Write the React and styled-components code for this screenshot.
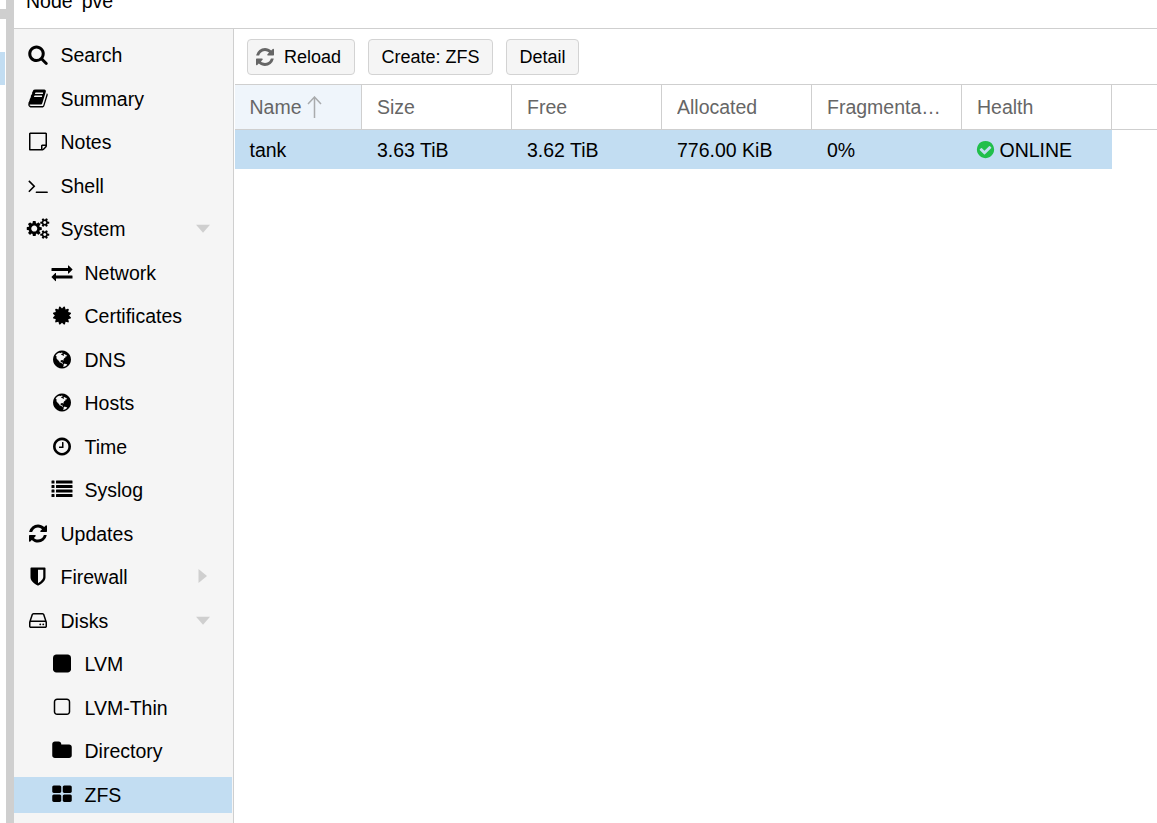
import React from 'react';
import styled, { createGlobalStyle } from 'styled-components';

const GlobalStyle = createGlobalStyle`
  * {
    box-sizing: border-box;
  }
  body {
    margin: 0;
    overflow: hidden;
    background: #fff;
    color: #000;
    font-family: 'Liberation Sans', Arial, Helvetica, sans-serif;
    font-size: 19.5px;
  }
`

const Page = styled.div`
  display: flex;
  width: 100vw;
  height: 100vh;
  overflow: hidden;
`

const TreeEdge = styled.div`
  display: flex;
  flex-direction: column;
  flex: none;
  width: 6px;
  height: 100%;
`

const TreeGap = styled.div`
  height: 10px;
  margin-top: 9px;
  background: #cfcfcf;
`

const TreeSelection = styled.div`
  width: 5px;
  height: 33px;
  margin-top: 33px;
  background: #c2ddf2;
`

const Splitter = styled.div`
  flex: none;
  width: 8px;
  background: #cfcfcf;
`

const Main = styled.div`
  display: flex;
  flex: 1;
  flex-direction: column;
  min-width: 0;
`

const TitleBar = styled.header`
  display: flex;
  align-items: flex-start;
  flex: none;
  height: 29px;
  padding-left: 12px;
  border-bottom: 1px solid #cfcfcf;
`

const Title = styled.div`
  margin-top: -10px;
  line-height: 22px;
`

const Body = styled.div`
  display: flex;
  flex: 1;
  min-height: 0;
`

const Sidebar = styled.nav`
  display: flex;
  flex-direction: column;
  flex: none;
  gap: 7.5px;
  width: 220px;
  padding: 8.5px 1px 0 0;
  background: #f5f5f5;
  border-right: 1px solid #cfcfcf;
`

const NavItem = styled.div`
  display: flex;
  align-items: center;
  flex: none;
  height: 36px;
  padding-left: ${props => props.$nested ? '36px' : '12px'};
  padding-right: 22px;
  background: ${props => props.$selected ? '#c2ddf2' : 'transparent'};
  cursor: pointer;
`

const NavIcon = styled.span`
  flex: none;
  width: 24px;
  margin-right: 10.5px;
  margin-bottom: 2.5px;
`

const NavLabel = styled.span`
  flex: 1;
  margin-top: -1px;
  line-height: 36px;
  white-space: nowrap;
`

const Glyph = styled.svg`
  display: block;
  flex: none;
  width: ${props => props.$size || 24}px;
  height: ${props => props.$size || 24}px;
  overflow: visible;
  fill: ${props => props.$color || '#000'};

  ${NavIcon} & path {
    transform: translateY(48px);
  }
`

const Expander = styled.svg`
  display: block;
  flex: none;
  width: 14px;
  height: 14px;
  margin-bottom: 2.5px;
  fill: #cfcfcf;
`

const Panel = styled.section`
  display: flex;
  flex: 1;
  flex-direction: column;
  min-width: 0;
  padding-left: 1px;
`

const Toolbar = styled.div`
  display: flex;
  flex: none;
  gap: 13px;
  height: 55px;
  padding: 10px 12px 0;
`

const Button = styled.button`
  display: flex;
  align-items: center;
  justify-content: ${props => props.$withIcon ? 'flex-start' : 'center'};
  gap: 7px;
  width: ${props => props.$width}px;
  height: 36px;
  padding: ${props => props.$withIcon ? '0 0 0 5px' : '0'};
  background: #f5f5f5;
  border: 1px solid #d3d3d3;
  border-radius: 4px;
  color: #000;
  font-family: inherit;
  font-size: 18px;
  line-height: 34px;
  white-space: nowrap;
`

const HeaderRow = styled.div`
  display: flex;
  flex: none;
  height: 46px;
  border-top: 1px solid #cfcfcf;
  border-bottom: 1px solid #cfcfcf;
`

const HeaderCell = styled.div`
  display: flex;
  align-items: center;
  flex: none;
  width: ${props => props.$width}px;
  padding: 0 15px;
  padding-left: ${props => props.$sorted ? 14.5 : 15}px;
  background: ${props => props.$sorted ? '#eff5fb' : '#fff'};
  border-right: 1px solid #cfcfcf;
  color: #666;
`

const HeaderText = styled.span`
  overflow: hidden;
  text-overflow: ellipsis;
  white-space: nowrap;
`

const SortArrow = styled.svg`
  flex: none;
  width: 15px;
  height: 22px;
  margin-left: 5px;
  fill: none;
  stroke: #a9abad;
  stroke-width: 1.5;
`

const Row = styled.div`
  display: flex;
  flex: none;
  width: 877px;
  height: 39px;
  background: #c2ddf2;
`

const Cell = styled.div`
  display: flex;
  align-items: center;
  flex: none;
  width: ${props => props.$width}px;
  padding: 2px 0 0 ${props => props.$sorted ? 14.5 : 15}px;
  white-space: nowrap;
`

const HealthIcon = styled.span`
  flex: none;
  margin: 0 2.5px 2px -3px;
`

const list = [128, 512, 896, 1280]
  .map(y => `M32 ${y}h192q32 0 32 32v192q0 32-32 32h-192q-32 0-32-32v-192q0-32 32-32zM416 ${y}h1344q32 0 32 32v192q0 32-32 32h-1344q-32 0-32-32v-192q0-32 32-32z`)
  .join('')

const smallGear = 'v140q0 16-149 31-12 27-30 52 51 113 51 138 0 4-4 7-122 71-124 71-8 0-46-47t-52-68q-20 2-30 2t-30-2q-14 21-52 68t-46 47q-2 0-124-71-4-3-4-7 0-25 51-138-18-25-30-52-149-15-149-31v-140q0-16 149-31 13-29 30-52-51-113-51-138 0-4 4-7 4-2 35-20t59-34 30-16q8 0 46 46.5t52 67.5q20-2 30-2t30 2q51-71 92-112l6-2q4 0 124 70 4 3 4 7 0 25-51 138 17 23 30 52 149 15 149 31z'

// all drawn on a 1792 unit square
const icons = {
  search: 'M1216 832q0-185-131.5-316.5t-316.5-131.5-316.5 131.5-131.5 316.5 131.5 316.5 316.5 131.5 316.5-131.5 131.5-316.5zm512 832q0 52-38 90t-90 38q-54 0-90-38l-343-342q-179 124-399 124-143 0-273.5-55.5t-225-150-150-225-55.5-273.5 55.5-273.5 150-225 225-150 273.5-55.5 273.5 55.5 225 150 150 225 55.5 273.5q0 220-124 399l343 343q37 37 37 90z',
  book: 'M1703 478q40 57 18 129l-275 906q-19 64-76.5 107.5t-122.5 43.5h-923q-77 0-148.5-53.5t-99.5-131.5q-24-67-2-127 0-4 3-27t4-37q1-8-3-21.5t-3-19.5q2-11 8-21t16.5-23.5 16.5-23.5q23-38 45-91.5t30-91.5q3-10 .5-30t-.5-28q3-11 17-28t17-23q21-36 42-92t25-90q1-9-2.5-32t.5-28q4-13 22-30.5t22-22.5q19-26 42.5-84.5t27.5-96.5q1-8-3-25.5t-2-26.5q2-8 9-18t18-23 17-21q8-12 16.5-30.5t15-35 16-36 19.5-32 26.5-23.5 36-11.5 47.5 5.5l-1 3q38-9 51-9h761q74 0 114 56t18 130l-274 906q-36 119-71.5 153.5t-128.5 34.5h-869q-27 0-38 15-11 16-1 43 24 70 144 70h923q29 0 56-15.5t35-41.5l300-987q7-22 5-57 38 15 59 43zm-1064 2q-4 13 2 22.5t20 9.5h608q13 0 25.5-9.5t16.5-22.5l21-64q4-13-2-22.5t-20-9.5h-608q-13 0-25.5 9.5t-16.5 22.5zm-83 256q-4 13 2 22.5t20 9.5h608q13 0 25.5-9.5t16.5-22.5l21-64q4-13-2-22.5t-20-9.5h-608q-13 0-25.5 9.5t-16.5 22.5z',
  note: 'M1528 1280h-248v248q29-10 41-22l185-185q12-12 22-41zm-280-128h288v-896h-1280v1280h896v-288q0-40 28-68t68-28zm416-928v1024q0 40-20 88t-48 76l-184 184q-28 28-76 48t-88 20h-1024q-40 0-68-28t-28-68v-1344q0-40 28-68t68-28h1344q40 0 68 28t28 68z',
  terminal: 'M649 983l-466 466q-10 10-23 10t-23-10l-50-50q-10-10-10-23t10-23l393-393-393-393q-10-10-10-23t10-23l50-50q10-10 23-10t23 10l466 466q10 10 10 23t-10 23zm1079 457v64q0 14-9 23t-23 9h-960q-14 0-23-9t-9-23v-64q0-14 9-23t23-9h960q14 0 23 9t9 23z',
  cogs: 'M832 896q0-106-75-181t-181-75-181 75-75 181 75 181 181 75 181-75 75-181zm768 512q0-52-38-90t-90-38-90 38-38 90q0 53 37.5 90.5t90.5 37.5 90.5-37.5 37.5-90.5zm0-1024q0-52-38-90t-90-38-90 38-38 90q0 53 37.5 90.5t90.5 37.5 90.5-37.5 37.5-90.5zm-384 421v185q0 10-7 19.5t-16 10.5l-155 24q-11 35-32 76 34 48 90 115 7 11 7 20 0 12-7 19-23 30-82.5 89.5t-78.5 59.5q-11 0-21-7l-115-90q-37 19-77 31-11 108-23 155-7 24-30 24h-186q-11 0-20-7.5t-10-17.5l-23-153q-34-10-75-31l-118 89q-7 7-20 7-11 0-21-8-144-133-144-160 0-9 7-19 10-14 41-53t47-61q-23-44-35-82l-152-24q-10-1-17-9.5t-7-19.5v-185q0-10 7-19.5t16-10.5l155-24q11-35 32-76-34-48-90-115-7-11-7-20 0-12 7-20 22-30 82-89t79-59q11 0 21 7l115 90q34-18 77-32 11-108 23-154 7-24 30-24h186q11 0 20 7.5t10 17.5l23 153q34 10 75 31l118-89q8-7 20-7 11 0 21 8 144 133 144 160 0 8-7 19-12 16-42 54t-45 60q23 48 34 82l152 23q10 2 17 10.5t7 19.5zM1856 1338' + smallGear + 'M1856 314' + smallGear,
  exchange: 'M1792 1184v192q0 13-9.5 22.5t-22.5 9.5h-1376v192q0 13-9.5 22.5t-22.5 9.5q-12 0-24-10l-319-320q-9-9-9-22 0-14 9-23l320-320q9-9 23-9 13 0 22.5 9.5t9.5 22.5v192h1376q13 0 22.5 9.5t9.5 22.5zm0-544q0 14-9 23l-320 320q-9 9-23 9-13 0-22.5-9.5t-9.5-22.5v-192h-1376q-13 0-22.5-9.5t-9.5-22.5v-192q0-13 9.5-22.5t22.5-9.5h1376v-192q0-14 9-23t23-9q12 0 24 10l319 319q9 9 9 23z',
  certificate: 'M1504 896l138 135q30 28 20 70-12 41-52 51l-188 48 53 186q12 41-19 70-29 31-70 19l-186-53-48 188q-10 40-51 52-12 2-19 2-31 0-51-22l-135-138-135 138q-28 30-70 20-41-11-51-52l-48-188-186 53q-41 12-70-19-31-29-19-70l53-186-188-48q-40-10-52-51-10-42 20-70l138-135-138-135q-30-28-20-70 12-41 52-51l188-48-53-186q-12-41 19-70 29-31 70-19l186 53 48-188q10-41 51-51 41-12 70 19l135 139 135-139q29-30 70-19 41 10 51 51l48 188 186-53q41-12 70 19 31 29 19 70l-53 186 188 48q40 10 52 51 10 42-20 70z',
  globe: 'M896 128q209 0 385.5 103t279.5 279.5 103 385.5-103 385.5-279.5 279.5-385.5 103-385.5-103-279.5-279.5-103-385.5 103-385.5 279.5-279.5 385.5-103zm274 521q-2 1-9.5 9.5t-13.5 9.5q2 0 4.5-5t5-11 3.5-7q6-7 22-15 14-6 52-12 34-8 51 11-2-2 9.5-13t14.5-12q3-2 15-4.5t15-7.5l2-22q-12 1-17.5-7t-6.5-21q0 2-6 8 0-7-4.5-8t-11.5 1-9 1q-10-3-15-7.5t-8-16.5-4-15q-2-5-9.5-11t-9.5-10q-1-2-2.5-5.5t-3-6.5-4-5.5-5.5-2.5-7 5-7.5 10-4.5 5q-3-2-6-1.5t-4.5 1-4.5 3-5 3.5q-3 2-8.5 3t-8.5 2q15-5-1-11-10-4-16-3 9-4 7.5-12t-8.5-14h5q-1-4-8.5-8.5t-17.5-8.5-13-6q-8-5-34-9.5t-33-.5q-5 6-4.5 10.5t4 14 3.5 12.5q1 6-5.5 13t-6.5 12q0 7 14 15.5t10 21.5q-3 8-16 16t-16 12q-5 8-1.5 18.5t10.5 16.5q2 2 1.5 4t-3.5 4.5-5.5 4-6.5 3.5l-3 2q-11 5-20.5-6t-13.5-26q-7-25-16-30-23-8-29 1-5-13-41-26-25-9-58-4 6-1 0-15-7-15-19-12 3-6 4-17.5t1-13.5q3-13 12-23 1-1 7-8.5t9.5-13.5.5-6q35 4 50-11 5-5 11.5-17t10.5-17q9-6 14-5.5t14.5 5.5 14.5 5q14 1 15.5-11t-7.5-20q12 1 3-17-4-7-8-9-12-4-27 5-8 4 2 8-1-1-9.5 10.5t-16.5 17.5-16-5q-1-1-5.5-13.5t-9.5-13.5q-8 0-16 15 3-8-11-15t-24-8q19-12-8-27-7-4-20.5-5t-19.5 4q-5 7-5.5 11.5t5 8 10.5 5.5 11.5 4 8.5 3q14 10 8 14-2 1-8.5 3.5t-11.5 4.5-6 4q-3 4 0 14t-2 14q-5-5-9-17.5t-7-16.5q7 9-25 6l-10-1q-4 0-16 2t-20.5 1-13.5-8q-4-8 0-20 1-4 4-2-4-3-11-9.5t-10-8.5q-46 15-94 41 6 1 12-1 5-2 13-6.5t10-5.5q34-14 42-7l5-5q14 16 20 25-7-4-30-1-20 6-22 12 7 12 5 18-4-3-11.5-10t-14.5-11-15-5q-16 0-22 1-146 80-235 222 7 7 12 8 4 1 5 9t2.5 11 11.5-3q9 8 3 19 1-1 44 27 19 17 21 21 3 11-10 18-1-2-9-9t-9-4q-3 5 .5 18.5t10.5 12.5q-7 0-9.5 16t-2.5 35.5-1 23.5l2 1q-3 12 5.5 34.5t21.5 19.5q-13 3 20 43 6 8 8 9 3 2 12 7.5t15 10 10 10.5q4 5 10 22.5t14 23.5q-2 6 9.5 20t10.5 23q-1 0-2.5 1t-2.5 1q3 7 15.5 14t15.5 13q1 3 2 10t3 11 8 2q2-20-24-62-15-25-17-29-3-5-5.5-15.5t-4.5-14.5q2 0 6 1.5t8.5 3.5 7.5 4 2 3q-3 7 2 17.5t12 18.5 17 19 12 13q6 6 14 19.5t0 13.5q9 0 20 10t17 20q5 8 8 26t5 24q2 7 8.5 13.5t12.5 9.5l16 8 13 7q5 2 18.5 10.5t21.5 11.5q10 4 16 4t14.5-2.5 13.5-3.5q15-2 29 15t21 21q36 19 55 11-2 1 .5 7.5t8 15.5 9 14.5 5.5 8.5q5 6 18 15t18 15q6-4 7-9-3 8 7 20t18 10q14-3 14-32-31 15-49-18 0-1-2.5-5.5t-4-8.5-2.5-8.5 0-7.5 5-3q9 0 10-3.5t-2-12.5-4-13q-1-8-11-20t-12-15q-5 9-16 8t-16-9q0 1-1.5 5.5t-1.5 6.5q-13 0-15-1 1-3 2.5-17.5t3.5-22.5q1-4 5.5-12t7.5-14.5 4-12.5-4.5-9.5-17.5-2.5q-19 1-26 20-1 3-3 10.5t-5 11.5-9 7q-7 3-24 2t-24-5q-13-8-22.5-29t-9.5-37q0-10 2.5-26.5t3-25-5.5-24.5q3-2 9-9.5t10-10.5q2-1 4.5-1.5t4.5 0 4-1.5 3-6q-1-1-4-3-3-3-4-3 7 3 28.5-1.5t27.5 1.5q15 11 22-2 0-1-2.5-9.5t-.5-13.5q5 27 29 9 3 3 15.5 5t17.5 5q3 2 7 5.5t5.5 4.5 5-.5 8.5-6.5q10 14 12 24 11 40 19 44 7 3 11 2t4.5-9.5 0-14-1.5-12.5l-1-8v-18l-1-8q-15-3-18.5-12t1.5-18.5 15-18.5q1-1 8-3.5t15.5-6.5 12.5-8q21-19 15-35 7 0 11-9-1 0-5-3t-7.5-5-4.5-2q9-5 2-16 5-3 7.5-11t7.5-10q9 12 21 2 7-8 1-16 5-7 20.5-10.5t18.5-9.5q7 2 8-2t1-12 3-12q4-5 15-9t13-5l17-11q3-4 0-4 18 2 31-11 10-11-6-20 3-6-3-9.5t-15-5.5q3-1 11.5-.5t10.5-1.5q15-10-7-16-17-5-43 12zm-163 877q206-36 351-189-3-3-12.5-4.5t-12.5-3.5q-18-7-24-8 1-7-2.5-13t-8-9-12.5-8-11-7q-2-2-7-6t-7-5.5-7.5-4.5-8.5-2-10 1l-3 1q-3 1-5.5 2.5t-5.5 3-4 3 0 2.5q-21-17-36-22-5-1-11-5.5t-10.5-7-10-1.5-11.5 7q-5 5-6 15t-2 13q-7-5 0-17.5t2-18.5q-3-6-10.5-4.5t-12 4.5-11.5 8.5-9 6.5-8.5 5.5-8.5 7.5q-3 4-6 12t-5 11q-2-4-11.5-6.5t-9.5-5.5q2 10 4 35t5 38q7 31-12 48-27 25-29 40-4 22 12 26 0 7-8 20.5t-7 21.5q0 6 2 16z',
  clock: 'M1024 544v448q0 14-9 23t-23 9h-320q-14 0-23-9t-9-23v-64q0-14 9-23t23-9h224v-352q0-14 9-23t23-9h64q14 0 23 9t9 23zm416 352q0-148-73-273t-198-198-273-73-273 73-198 198-73 273 73 273 198 198 273 73 273-73 198-198 73-273zm224 0q0 209-103 385.5t-279.5 279.5-385.5 103-385.5-103-279.5-279.5-103-385.5 103-385.5 279.5-279.5 385.5-103 385.5 103 279.5 279.5 103 385.5z',
  list,
  refresh: 'M1639 1056q0 5-1 7-64 268-268 434.5t-478 166.5q-146 0-282.5-55t-243.5-157l-129 129q-19 19-45 19t-45-19-19-45v-448q0-26 19-45t45-19h448q26 0 45 19t19 45-19 45l-137 137q71 66 161 102t187 36q134 0 250-65t186-179q11-17 53-117 8-23 30-23h192q13 0 22.5 9.5t9.5 22.5zm25-800v448q0 26-19 45t-45 19h-448q-26 0-45-19t-19-45 19-45l138-138q-148-137-349-137-134 0-250 65t-186 179q-11 17-53 117-8 23-30 23h-199q-13 0-22.5-9.5t-9.5-22.5v-7q65-268 270-434.5t480-166.5q146 0 284 55.5t245 156.5l130-129q19-19 45-19t45 19 19 45z',
  shield: 'M1344 960v-640h-448v1137q119-63 213-137 235-184 235-360zm192-768v768q0 86-33.5 170.5t-83 150-118 127.5-126.5 103-121 77.5-89.5 49.5-42.5 20q-12 6-26 6t-26-6q-16-7-42.5-20t-89.5-49.5-121-77.5-126.5-103-118-127.5-83-150-33.5-170.5v-768q0-26 19-45t45-19h1152q26 0 45 19t19 45z',
  disk: 'M1168 1216q0 33-23.5 56.5t-56.5 23.5-56.5-23.5-23.5-56.5 23.5-56.5 56.5-23.5 56.5 23.5 23.5 56.5zm256 0q0 33-23.5 56.5t-56.5 23.5-56.5-23.5-23.5-56.5 23.5-56.5 56.5-23.5 56.5 23.5 23.5 56.5zm112 160v-320q0-13-9.5-22.5t-22.5-9.5h-1216q-13 0-22.5 9.5t-9.5 22.5v320q0 13 9.5 22.5t22.5 9.5h1216q13 0 22.5-9.5t9.5-22.5zm-1230-480h1180l-157-482q-4-13-16-21.5t-26-8.5h-782q-14 0-26 8.5t-16 21.5zm1358 160v320q0 66-47 113t-113 47h-1216q-66 0-113-47t-47-113v-320q0-25 16-75l197-606q17-53 63-86t101-33h782q55 0 101 33t63 86l197 606q16 50 16 75z',
  square: 'M1664 416v960q0 119-84.5 203.5t-203.5 84.5h-960q-119 0-203.5-84.5t-84.5-203.5v-960q0-119 84.5-203.5t203.5-84.5h960q119 0 203.5 84.5t84.5 203.5z',
  squareOutline: 'M1312 256h-832q-66 0-113 47t-47 113v832q0 66 47 113t113 47h832q66 0 113-47t47-113v-832q0-66-47-113t-113-47zm288 160v832q0 119-84.5 203.5t-203.5 84.5h-832q-119 0-203.5-84.5t-84.5-203.5v-832q0-119 84.5-203.5t203.5-84.5h832q119 0 203.5 84.5t84.5 203.5z',
  folder: 'M1728 608v704q0 92-66 158t-158 66h-1216q-92 0-158-66t-66-158v-960q0-92 66-158t158-66h320q92 0 158 66t66 158v32h672q92 0 158 66t66 158z',
  grid: 'M832 1024v384q0 52-38 90t-90 38h-512q-52 0-90-38t-38-90v-384q0-52 38-90t90-38h512q52 0 90 38t38 90zm0-768v384q0 52-38 90t-90 38h-512q-52 0-90-38t-38-90v-384q0-52 38-90t90-38h512q52 0 90 38t38 90zm896 768v384q0 52-38 90t-90 38h-512q-52 0-90-38t-38-90v-384q0-52 38-90t90-38h512q52 0 90 38t38 90zm0-768v384q0 52-38 90t-90 38h-512q-52 0-90-38t-38-90v-384q0-52 38-90t90-38h512q52 0 90 38t38 90z',
  check: 'M1412 734q0-28-18-46l-91-90q-19-19-45-19t-45 19l-408 407-226-226q-19-19-45-19t-45 19l-91 90q-18 18-18 46 0 27 18 45l362 362q19 19 45 19 27 0 46-19l543-543q18-18 18-45zm252 162q0 209-103 385.5t-279.5 279.5-385.5 103-385.5-103-279.5-279.5-103-385.5 103-385.5 279.5-279.5 385.5-103 385.5 103 279.5 279.5 103 385.5z',
}

const navItems = [
  { label: 'Search', icon: 'search' },
  { label: 'Summary', icon: 'book' },
  { label: 'Notes', icon: 'note' },
  { label: 'Shell', icon: 'terminal' },
  { label: 'System', icon: 'cogs', expander: 'open' },
  { label: 'Network', icon: 'exchange', nested: true },
  { label: 'Certificates', icon: 'certificate', nested: true },
  { label: 'DNS', icon: 'globe', nested: true },
  { label: 'Hosts', icon: 'globe', nested: true },
  { label: 'Time', icon: 'clock', nested: true },
  { label: 'Syslog', icon: 'list', nested: true },
  { label: 'Updates', icon: 'refresh' },
  { label: 'Firewall', icon: 'shield', expander: 'closed' },
  { label: 'Disks', icon: 'disk', expander: 'open' },
  { label: 'LVM', icon: 'square', nested: true },
  { label: 'LVM-Thin', icon: 'squareOutline', nested: true },
  { label: 'Directory', icon: 'folder', nested: true },
  { label: 'ZFS', icon: 'grid', nested: true, selected: true },
]

const columns = [
  { title: 'Name', key: 'name', width: 127, sorted: true },
  { title: 'Size', key: 'size', width: 150 },
  { title: 'Free', key: 'free', width: 150 },
  { title: 'Allocated', key: 'alloc', width: 150 },
  { title: 'Fragmentation', key: 'frag', width: 150 },
  { title: 'Health', key: 'health', width: 150 },
]

const pools = [
  { name: 'tank', size: '3.63 TiB', free: '3.62 TiB', alloc: '776.00 KiB', frag: '0%', health: 'ONLINE' },
]

// the view box leaves a margin of 128 units round each glyph
function Icon({ name, size, color }) {
  return (
    <Glyph viewBox="-128 -128 2048 2048" $size={size} $color={color}>
      <path d={icons[name]} />
    </Glyph>
  )
}

function NavEntry({ item }) {
  return (
    <NavItem $nested={item.nested} $selected={item.selected}>
      <NavIcon><Icon name={item.icon} /></NavIcon>
      <NavLabel>{item.label}</NavLabel>
      {item.expander && (
        <Expander viewBox="0 0 14 14">
          <path d={item.expander === 'open' ? 'M0 3.8h14l-7 8z' : 'M2.5 0v14l8.5-7z'} />
        </Expander>
      )}
    </NavItem>
  )
}

function PoolGrid() {
  return (
    <>
      <HeaderRow>
        {columns.map(col => (
          <HeaderCell key={col.key} $width={col.width} $sorted={col.sorted}>
            <HeaderText>{col.title}</HeaderText>
            {col.sorted && (
              <SortArrow viewBox="0 0 15 22">
                <path d="M7.5 22V1M1 8l6.5-7 6.5 7" />
              </SortArrow>
            )}
          </HeaderCell>
        ))}
      </HeaderRow>
      {pools.map(pool => (
        <Row key={pool.name}>
          {columns.map(col => (
            <Cell key={col.key} $width={col.width} $sorted={col.sorted}>
              {col.key === 'health' && (
                <HealthIcon><Icon name="check" size={23} color="#21bf4b" /></HealthIcon>
              )}
              {pool[col.key]}
            </Cell>
          ))}
        </Row>
      ))}
    </>
  )
}

function App() {
  return (
    <Page>
      <GlobalStyle />
      <TreeEdge>
        <TreeGap />
        <TreeSelection />
      </TreeEdge>
      <Splitter />
      <Main>
        <TitleBar>
          <Title>Node 'pve'</Title>
        </TitleBar>
        <Body>
          <Sidebar>
            {navItems.map(item => <NavEntry key={item.label} item={item} />)}
          </Sidebar>
          <Panel>
            <Toolbar>
              <Button $width={108} $withIcon>
                <Icon name="refresh" color="#666" />
                Reload
              </Button>
              <Button $width={125}>Create: ZFS</Button>
              <Button $width={73}>Detail</Button>
            </Toolbar>
            <PoolGrid />
          </Panel>
        </Body>
      </Main>
    </Page>
  )
}

export default App
